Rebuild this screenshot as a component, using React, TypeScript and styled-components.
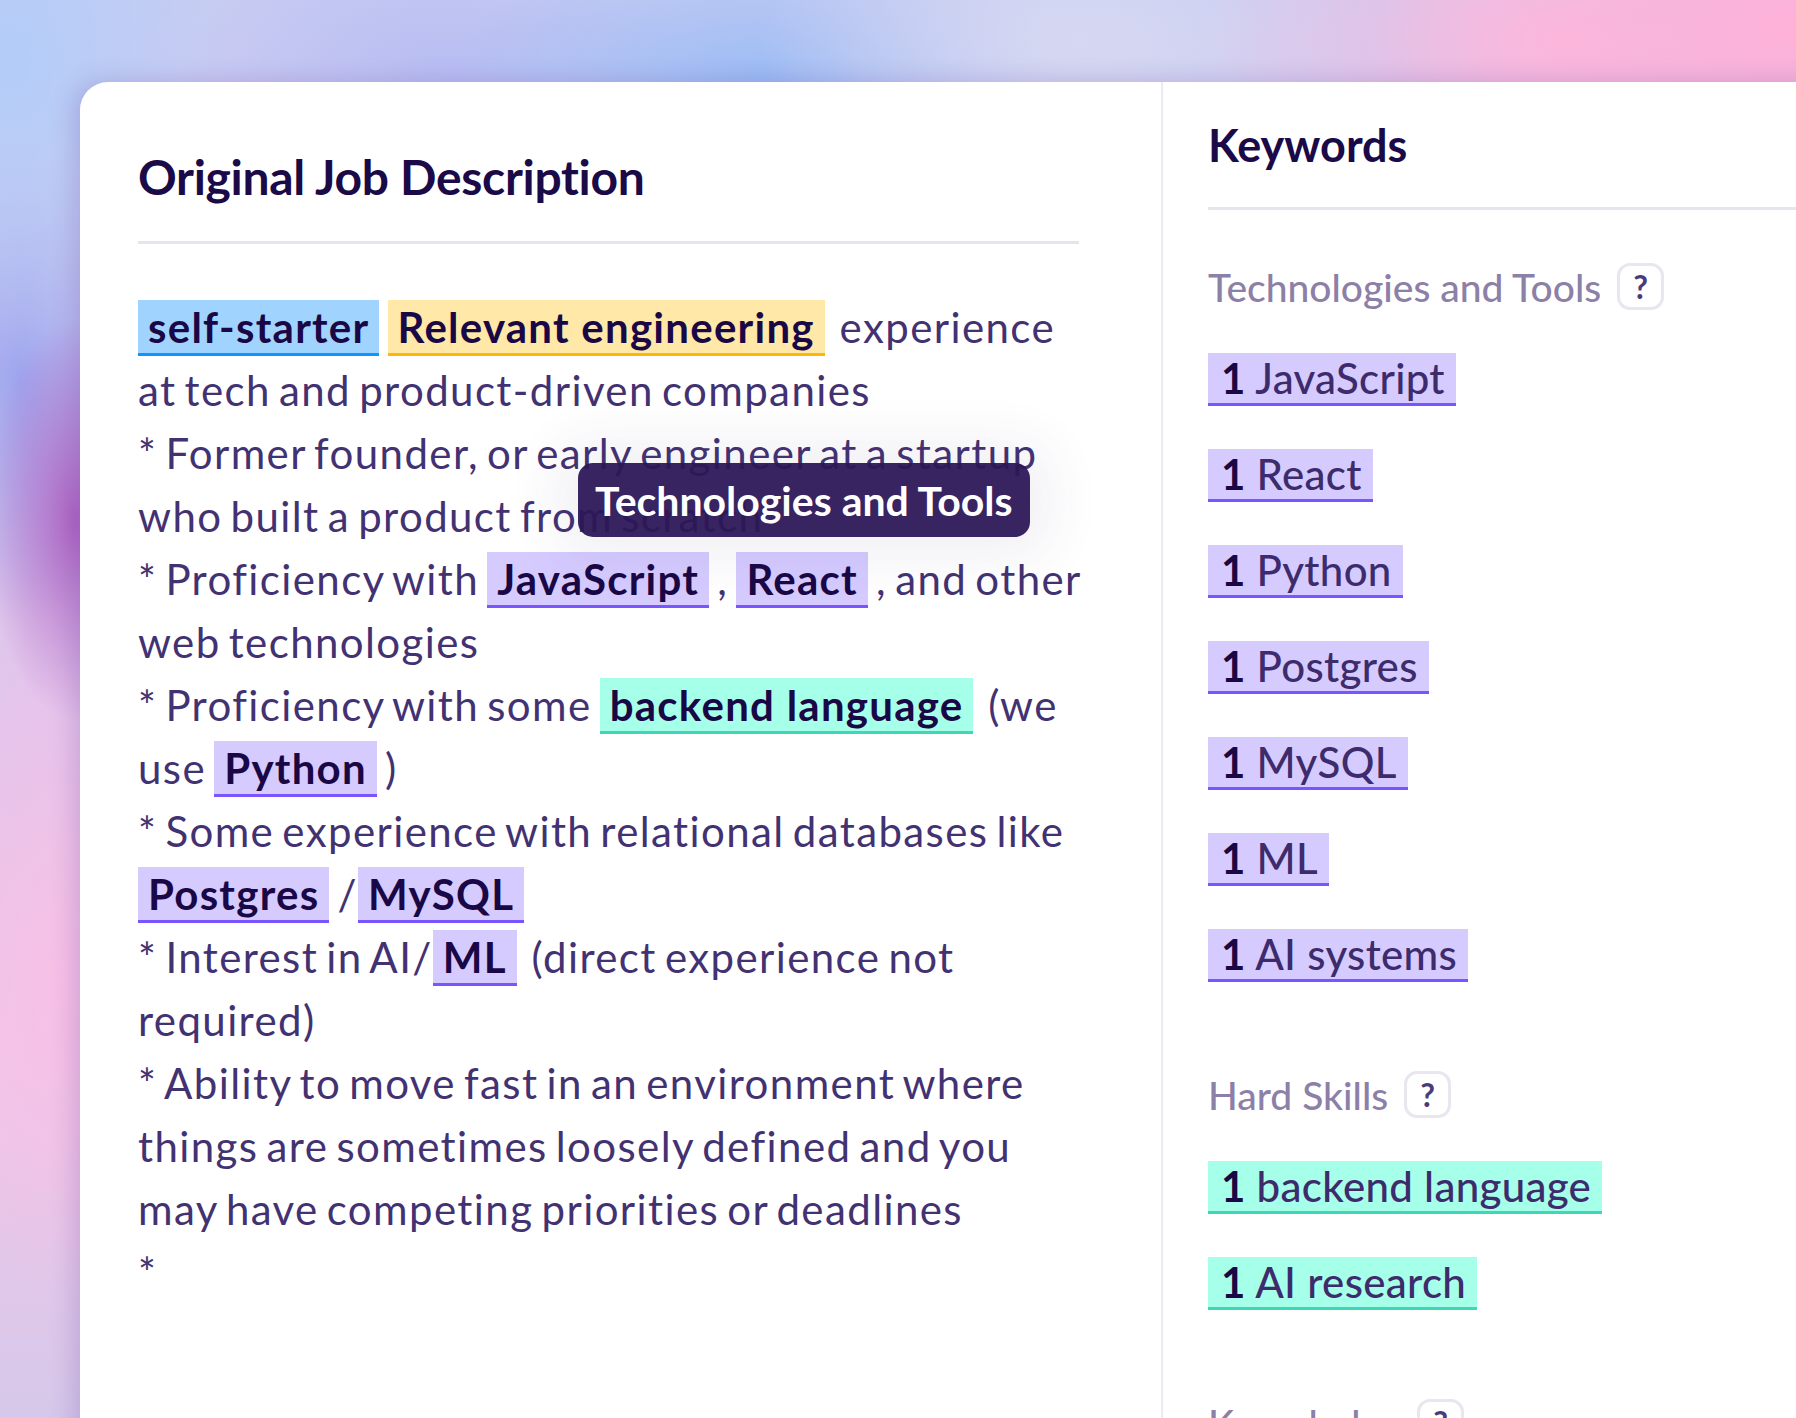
import React from "react";
import styled, { createGlobalStyle } from "styled-components";

type Tone = "blue" | "yellow" | "purple" | "teal";

const tones: Record<Tone, { bg: string; line: string }> = {
  blue: { bg: "#a0d4ff", line: "#0a98ff" },
  yellow: { bg: "#ffe8a8", line: "#ffb800" },
  purple: { bg: "#d5cbff", line: "#7a55ff" },
  teal: { bg: "#a6ffe9", line: "#3fd8b6" },
};

interface KeywordGroup {
  title: string;
  tone: Tone;
  items: string[];
}

const groups: KeywordGroup[] = [
  {
    title: "Technologies and Tools",
    tone: "purple",
    items: ["JavaScript", "React", "Python", "Postgres", "MySQL", "ML", "AI systems"],
  },
  {
    title: "Hard Skills",
    tone: "teal",
    items: ["backend language", "AI research"],
  },
  {
    title: "Knowledge",
    tone: "purple",
    items: ["startup"],
  },
];

// wider gap the source text leaves before a few words
const gap = " \u2009";

const App = () => {
  return (
    <>
      <GlobalStyle />
      <Page>
        <Card>
          <LeftPane>
            <Title>Original Job Description</Title>
            <Rule />
            <Description>
              <Paragraph>
                <Mark tone="blue">self-starter</Mark> <Mark tone="yellow">Relevant engineering</Mark>
                {gap}experience at tech and product-driven companies
              </Paragraph>
              <Paragraph>
                * Former founder, or early engineer at a startup who built a product from scratch
              </Paragraph>
              <Paragraph>
                * Proficiency with <Mark tone="purple">JavaScript</Mark> , <Mark tone="purple">React</Mark> , and
                other web technologies
              </Paragraph>
              <Paragraph>
                * Proficiency with some <Mark tone="teal">backend language</Mark>
                {gap}(we use <Mark tone="purple">Python</Mark> )
              </Paragraph>
              <Paragraph>
                * Some experience with relational databases like <Mark tone="purple">Postgres</Mark> /
                <Mark tone="purple">MySQL</Mark>
              </Paragraph>
              <Paragraph>
                * Interest in AI/<Mark tone="purple">ML</Mark>
                {gap}(direct experience not required)
              </Paragraph>
              <Paragraph>
                * Ability to move fast in an environment where things are sometimes loosely defined and you
                may have competing priorities or deadlines
              </Paragraph>
              <Paragraph>*</Paragraph>
            </Description>
          </LeftPane>

          <RightPane>
            <PanelTitle>Keywords</PanelTitle>
            <Rule />
            <Groups>
              {groups.map((group) => (
                <Group key={group.title}>
                  <GroupHeader>
                    <GroupTitle>{group.title}</GroupTitle>
                    <HelpBadge>?</HelpBadge>
                  </GroupHeader>
                  {group.items.map((item) => (
                    <Chip key={item} tone={group.tone}>
                      <Count>1</Count> {item}
                    </Chip>
                  ))}
                </Group>
              ))}
            </Groups>
          </RightPane>

          <Tooltip>Technologies and Tools</Tooltip>
        </Card>
      </Page>
    </>
  );
};

export default App;

const GlobalStyle = createGlobalStyle`
  html, body {
    margin: 0;
    padding: 0;
    width: 1796px;
    height: 1418px;
    overflow: hidden;
    font-family: Lato, "Noto Sans", "Liberation Sans", sans-serif;
  }
  * {
    box-sizing: border-box;
  }
`;

const Page = styled.div`
  width: 1796px;
  height: 1418px;
  overflow: hidden;
  padding: 82px 0 0 80px;
  background-color: #dcc9ec;
  background-image:
    radial-gradient(ellipse 420px 260px at 1796px 30px, #ffb0d8 0%, rgba(255, 176, 216, 0) 100%),
    radial-gradient(ellipse 360px 200px at 1560px 40px, rgba(255, 184, 220, 0.9) 0%, rgba(255, 184, 220, 0) 100%),
    radial-gradient(ellipse 320px 160px at 1080px 40px, #d6d8f2 0%, rgba(214, 216, 242, 0) 100%),
    radial-gradient(ellipse 320px 150px at 760px 90px, #98bbf5 0%, rgba(152, 187, 245, 0) 100%),
    radial-gradient(ellipse 260px 140px at 440px 70px, #b8bdf2 0%, rgba(184, 189, 242, 0) 100%),
    radial-gradient(ellipse 220px 300px at 10px 60px, #b2cdf8 0%, rgba(178, 205, 248, 0) 100%),
    radial-gradient(ellipse 90px 200px at 75px 520px, #b066c4 0%, rgba(176, 102, 196, 0) 100%),
    radial-gradient(ellipse 120px 240px at 20px 380px, #9ea6ee 0%, rgba(158, 166, 238, 0) 100%),
    radial-gradient(ellipse 140px 320px at 60px 980px, #f7c0e6 0%, rgba(247, 192, 230, 0) 100%),
    radial-gradient(ellipse 140px 200px at 40px 720px, #e4c4ec 0%, rgba(228, 196, 236, 0) 100%),
    linear-gradient(180deg, #c8ccf2 0%, #d8c8ec 40%, #efc6e8 75%, #d6c8ea 100%);
`;

const Card = styled.div`
  position: relative;
  display: flex;
  width: 1760px;
  min-height: 1400px;
  background: #ffffff;
  border-radius: 28px 0 0 0;
  box-shadow: -6px 0 24px rgba(90, 50, 150, 0.22);
`;

const LeftPane = styled.div`
  flex-shrink: 0;
  width: 1081px;
  padding: 66px 82px 0 58px;
`;

const RightPane = styled.div`
  flex: 1;
  border-left: 2px solid #ebe9f1;
  padding: 36px 0 0 45px;
`;

const Title = styled.h1`
  margin: 0;
  font-size: 48px;
  line-height: 1.2;
  font-weight: 700;
  letter-spacing: -0.3px;
  color: #1b0a48;
`;

const PanelTitle = styled(Title)`
  font-size: 45px;
  letter-spacing: 0;
`;

const Rule = styled.div`
  height: 3px;
  margin-top: 35px;
  background: #e6e5ed;
`;

const Description = styled.div`
  margin-top: 52px;
  margin-right: -10px;
  font-size: 42px;
  line-height: 63px;
  letter-spacing: 1.4px;
  word-spacing: -4px;
  color: #433272;
`;

const Paragraph = styled.div``;

const Mark = styled.span<{ tone: Tone }>`
  padding: 2px 10px 1px;
  font-weight: 700;
  letter-spacing: 1.25px;
  word-spacing: 0;
  color: #1a0846;
  background: ${(props) => tones[props.tone].bg};
  border-bottom: 3px solid ${(props) => tones[props.tone].line};
`;

const Groups = styled.div`
  display: flex;
  flex-direction: column;
  gap: 89px;
  margin-top: 53px;
`;

const Group = styled.div`
  display: flex;
  flex-direction: column;
  align-items: flex-start;
  gap: 43px;
`;

const GroupHeader = styled.div`
  display: flex;
  align-items: center;
  gap: 16px;
  height: 47px;
`;

const GroupTitle = styled.span`
  font-size: 39px;
  font-weight: 500;
  color: #8c80a8;
`;

const HelpBadge = styled.span`
  display: flex;
  align-items: center;
  justify-content: center;
  width: 47px;
  height: 47px;
  border: 3px solid #e8e6ef;
  border-radius: 13px;
  font-size: 32px;
  font-weight: 700;
  color: #4b3b7b;
`;

const Chip = styled.div<{ tone: Tone }>`
  height: 53px;
  padding: 0 11px 0 13px;
  font-size: 42px;
  line-height: 50px;
  font-weight: 500;
  letter-spacing: 0.3px;
  white-space: nowrap;
  color: #3d2b6c;
  background: ${(props) => tones[props.tone].bg};
  border-bottom: 3px solid ${(props) => tones[props.tone].line};
`;

const Count = styled.span`
  font-weight: 700;
  color: #1a0846;
`;

const Tooltip = styled.div`
  position: absolute;
  left: 498px;
  top: 381px;
  height: 74px;
  padding: 0 17px;
  display: flex;
  align-items: center;
  border-radius: 15px;
  background: rgba(44, 22, 86, 0.94);
  color: #ffffff;
  font-size: 41px;
  font-weight: 700;
  white-space: nowrap;
  box-shadow: 0 0 50px 24px rgba(70, 50, 110, 0.07);
`;
